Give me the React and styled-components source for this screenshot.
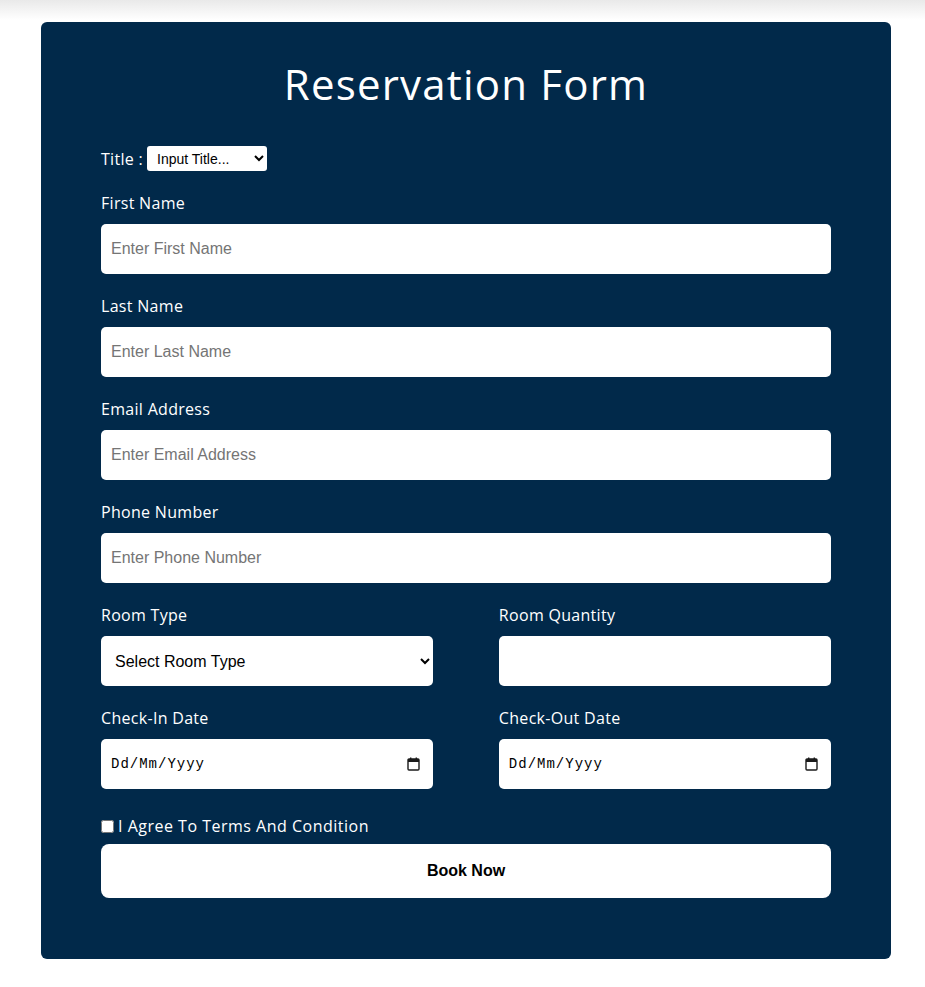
import React, { useState } from "react";
import styled, { createGlobalStyle } from "styled-components";

const Global = createGlobalStyle`
  body {
    margin: 0;
    background: linear-gradient(#e9e9e9, #ffffff 20px) no-repeat;
    font-family: "Open Sans", "Noto Sans", sans-serif;
  }
`;

const fields = [
  { label: "First Name", placeholder: "Enter First Name" },
  { label: "Last Name", placeholder: "Enter Last Name" },
  { label: "Email Address", placeholder: "Enter Email Address" },
  { label: "Phone Number", placeholder: "Enter Phone Number" }
];

const CalendarIcon = () => (
  <svg width="13" height="14" viewBox="0 0 13 14">
    <rect x="1" y="2" width="11" height="11" rx="1" fill="none" stroke="#1a1a1a" strokeWidth="1.4" />
    <rect x="1" y="2" width="11" height="3" fill="#1a1a1a" />
    <rect x="3" y="0.5" width="1.4" height="2" fill="#1a1a1a" />
    <rect x="8.6" y="0.5" width="1.4" height="2" fill="#1a1a1a" />
  </svg>
);

const DateField = ({ label }) => {
  const [type, setType] = useState("text");
  return (
    <Field>
      <Label>{label}</Label>
      <DateBox>
        <DateInput
          type={type}
          placeholder="dd/mm/yyyy"
          onFocus={() => setType("date")}
          onBlur={(e) => !e.target.value && setType("text")}
        />
        {type === "text" && (
          <IconSpot>
            <CalendarIcon />
          </IconSpot>
        )}
      </DateBox>
    </Field>
  );
};

const App = () => {
  return (
    <Page>
      <Global />
      <Card>
        <Heading>Reservation Form</Heading>
        <TitleRow>
          <Label as="span">Title :</Label>
          <TitleSelect defaultValue="">
            <option value="">Input Title...</option>
            <option>Mr</option>
            <option>Mrs</option>
            <option>Ms</option>
          </TitleSelect>
        </TitleRow>
        <Fields>
          {fields.map((f) => (
            <Field key={f.label}>
              <Label>{f.label}</Label>
              <Input type="text" placeholder={f.placeholder} />
            </Field>
          ))}
          <Row>
            <Field>
              <Label>Room Type</Label>
              <Select defaultValue="">
                <option value="">Select Room Type</option>
                <option>Single</option>
                <option>Double</option>
                <option>Suite</option>
              </Select>
            </Field>
            <Field>
              <Label>Room Quantity</Label>
              <Input type="number" />
            </Field>
          </Row>
          <Row>
            <DateField label="Check-In Date" />
            <DateField label="Check-Out Date" />
          </Row>
        </Fields>
        <Agree>
          <Check type="checkbox" />
          I Agree To Terms And Condition
        </Agree>
        <Button>Book Now</Button>
      </Card>
    </Page>
  );
};
export default App;

const Page = styled.div`
  padding: 22px 34px 28px 41px;
`;
const Card = styled.div`
  background-color: #01294a;
  border-radius: 6px;
  padding: 38px 60px 61px;
  display: flex;
  flex-direction: column;
  color: #ffffff;
  text-transform: capitalize;
`;
const Heading = styled.h1`
  margin: 0 0 38px;
  font-size: 42px;
  line-height: 48px;
  font-weight: 400;
  letter-spacing: 1.2px;
  text-align: center;
`;
const TitleRow = styled.div`
  display: flex;
  align-items: center;
  gap: 4px;
  height: 25px;
  margin-bottom: 21px;
`;
const TitleSelect = styled.select`
  width: 120px;
  height: 25px;
  border: none;
  border-radius: 3px;
  padding: 0 6px;
  font-family: "Liberation Sans", Arial, sans-serif;
  font-size: 14px;
  color: #000;
  background: #fff;
`;
const Fields = styled.div`
  display: flex;
  flex-direction: column;
  gap: 21px;
`;
const Field = styled.div`
  display: flex;
  flex-direction: column;
  gap: 10px;
  flex: 0 0 45.5%;
`;
const Row = styled.div`
  display: flex;
  justify-content: space-between;
`;
const Label = styled.label`
  font-size: 16px;
  line-height: 22px;
  font-weight: 500;
  letter-spacing: 0.3px;
`;
const Input = styled.input`
  box-sizing: border-box;
  width: 100%;
  height: 50px;
  border: none;
  border-radius: 5px;
  padding: 0 10px;
  font-family: "Liberation Sans", Arial, sans-serif;
  font-size: 16px;
  color: #000;
  outline: none;
  &::placeholder {
    color: #757575;
  }
`;
const Select = styled.select`
  box-sizing: border-box;
  width: 100%;
  height: 50px;
  border: none;
  border-radius: 5px;
  padding: 0 10px;
  font-family: "Liberation Sans", Arial, sans-serif;
  font-size: 16px;
  color: #000;
  background: #fff;
`;
const DateBox = styled.div`
  position: relative;
`;
const DateInput = styled(Input)`
  font-family: "Liberation Mono", monospace;
  font-size: 14px;
  letter-spacing: 1px;
  &::placeholder {
    color: #000;
    text-transform: capitalize;
  }
`;
const IconSpot = styled.span`
  position: absolute;
  right: 13px;
  top: 18px;
  display: flex;
  pointer-events: none;
`;
const Agree = styled.label`
  display: flex;
  align-items: center;
  margin-top: 26px;
  font-size: 16px;
  line-height: 22px;
  letter-spacing: 0.5px;
`;
const Check = styled.input`
  width: 13px;
  height: 13px;
  margin: 0 4px 0 0;
`;
const Button = styled.button`
  margin-top: 7px;
  height: 54px;
  border: none;
  border-radius: 8px;
  background: #fff;
  color: #000;
  font-family: "Liberation Sans", Arial, sans-serif;
  font-size: 16px;
  font-weight: 700;
  cursor: pointer;
`;
